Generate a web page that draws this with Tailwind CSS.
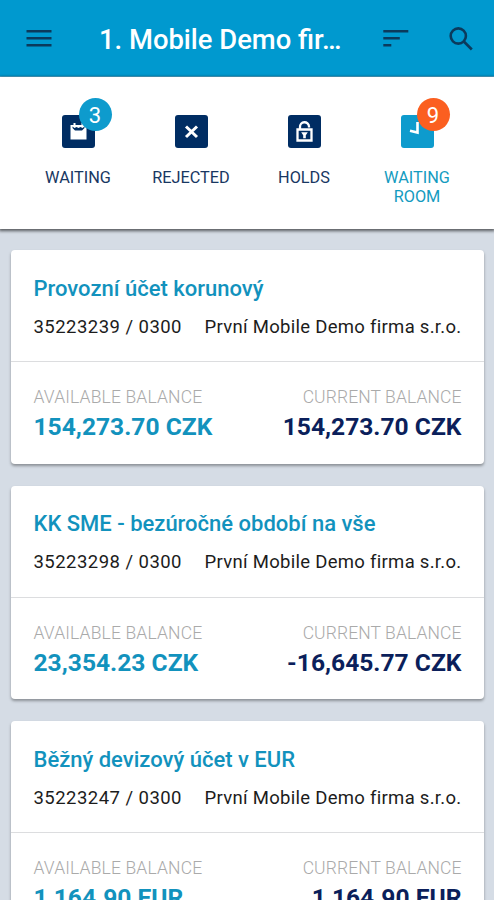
<!DOCTYPE html>
<html lang="en">
<head>
<meta charset="utf-8">
<title>Accounts</title>
<script src="https://cdn.jsdelivr.net/npm/@tailwindcss/browser@4"></script>
</head>
<body class="h-[900px] w-[494px] overflow-hidden bg-[#d5dce5] font-['Roboto',sans-serif]">
<header class="flex h-[77px] items-center border-b border-[#4fb2da] bg-[#0099cf]">
  <svg class="ml-[26px] h-[18px] w-[26px] shrink-0" viewBox="0 0 26 18" fill="none" stroke="#0b3a5c" stroke-width="2.4"><path d="M.5 2.2h25M.5 9.2h25M.5 16.2h25"/></svg>
  <h1 class="ml-[47px] w-[245px] shrink-0 pt-[3px] text-[27.4px] leading-8 font-medium whitespace-nowrap text-white">1. Mobile Demo fir…</h1>
  <svg class="ml-[39px] h-[18px] w-[26px] shrink-0" viewBox="0 0 26 18" fill="none" stroke="#0b3a5c" stroke-width="2.4"><path d="M.3 2.2h25M.3 9.2h16.5M.3 16.2h8"/></svg>
  <svg class="mt-px ml-[40px] h-6 w-6 shrink-0" viewBox="0 0 24 24" fill="none" stroke="#0b3a5c" stroke-width="2.6"><circle cx="9.3" cy="9" r="7.6"/><path d="M14.8 14.5l8 8"/></svg>
</header>
<nav class="relative grid h-[152px] grid-cols-[113px_113px_113px_113px] justify-center bg-white pt-[38px] pl-px text-center text-[16.3px] leading-[19px] text-[#183762] shadow-[0_1px_3px_1px_rgba(0,0,0,0.6)]">
  <div class="flex flex-col items-center">
    <div class="relative h-[33px] w-[33px]">
      <svg class="h-full w-full" viewBox="0 0 33 33"><rect width="33" height="33" rx="3" fill="#002d63"/><path d="M8.500 10h3V8h2v2h6V8h2v2h3v14.500h-16z" fill="#fff"/><path d="M10.500 11.500v1.500l2.500 2.500h7l2.500-2.500v-1.500l-2 1.500-2-1-2 1-2-1-2 1z" fill="#002d63"/></svg>
      <span class="absolute -top-[17px] left-[17px] flex h-[33px] w-[33px] items-center justify-center rounded-full bg-[#0e9bcd] pt-[2px] text-[22px] text-white">3</span>
    </div>
    <span class="mt-[20px]">WAITING</span>
  </div>
  <div class="flex flex-col items-center">
    <svg class="h-[33px] w-[33px]" viewBox="0 0 33 33"><rect width="33" height="33" rx="3" fill="#002d63"/><path d="M11 11.500l11 10.500M22 11.500L11 22" stroke="#fff" stroke-width="3"/></svg>
    <span class="mt-[20px]">REJECTED</span>
  </div>
  <div class="flex flex-col items-center">
    <svg class="h-[33px] w-[33px]" viewBox="0 0 33 33"><rect width="33" height="33" rx="3" fill="#002d63"/><path d="M9.500 14.500h14v11h-14zM12 14V12a4.500 4.500 0 0 1 9-.500v1" fill="none" stroke="#fff" stroke-width="2.300"/><path d="M13.200 17.300h6.600l-2 3v3h-2.600v-3z" fill="#fff"/></svg>
    <span class="mt-[20px]">HOLDS</span>
  </div>
  <div class="flex flex-col items-center text-[#149bbf]">
    <div class="relative h-[33px] w-[33px]">
      <svg class="h-full w-full" viewBox="0 0 33 33"><rect width="33" height="33" rx="3" fill="#0e9bcd"/><path d="M16.500 7v10.500L9 15.800" fill="none" stroke="#fff" stroke-width="2.600"/></svg>
      <span class="absolute -top-[17px] left-[16px] flex h-[33px] w-[33px] items-center justify-center rounded-full bg-[#fb5f20] pt-[2px] text-[22px] text-white">9</span>
    </div>
    <span class="mt-[20px] w-[80px]">WAITING ROOM</span>
  </div>
</nav>
<main class="flex flex-col gap-[22px] pt-[21px] pr-[10px] pl-[11px]">
  <article class="h-[213.500px] shrink-0 rounded-[4px] bg-white shadow-[0_2px_3px_rgba(0,0,0,0.35)]">
    <div class="h-[112px] border-b border-[#dcdddf] px-[22.500px] pt-[25px]">
      <h2 class="text-[22px] leading-[28px] font-medium whitespace-nowrap text-[#1292bd]">Provozní účet korunový</h2>
      <div class="mt-[12px] flex justify-between text-[18.500px] leading-6 whitespace-nowrap text-[#1c1c1c]"><span class="tracking-[0.46px]">35223239 / 0300</span><span class="tracking-[0.29px]">První Mobile Demo firma s.r.o.</span></div>
    </div>
    <div class="flex justify-between px-[22.500px] pt-[23px] whitespace-nowrap">
      <div><div class="text-[17.500px] leading-6 font-light tracking-[0.15px] text-[#aaaaaa]">AVAILABLE BALANCE</div><div class="mt-[2px] text-[24.600px] leading-[32px] font-bold text-[#1292bd]">154,273.70 CZK</div></div>
      <div class="text-right"><div class="text-[17.500px] leading-6 font-light tracking-[0.1px] text-[#aaaaaa]">CURRENT BALANCE</div><div class="mt-[2px] text-[24.600px] leading-[32px] font-bold text-[#0b1f5b]">154,273.70 CZK</div></div>
    </div>
  </article>
  <article class="h-[213.500px] shrink-0 rounded-[4px] bg-white shadow-[0_2px_3px_rgba(0,0,0,0.35)]">
    <div class="h-[112px] border-b border-[#dcdddf] px-[22.500px] pt-[24.500px]">
      <h2 class="text-[22px] leading-[28px] font-medium whitespace-nowrap text-[#1292bd]">KK SME - bezúročné období na vše</h2>
      <div class="mt-[12px] flex justify-between text-[18.500px] leading-6 whitespace-nowrap text-[#1c1c1c]"><span class="tracking-[0.46px]">35223298 / 0300</span><span class="tracking-[0.29px]">První Mobile Demo firma s.r.o.</span></div>
    </div>
    <div class="flex justify-between px-[22.500px] pt-[23px] whitespace-nowrap">
      <div><div class="text-[17.500px] leading-6 font-light tracking-[0.15px] text-[#aaaaaa]">AVAILABLE BALANCE</div><div class="mt-[2px] text-[24.600px] leading-[32px] font-bold text-[#1292bd]">23,354.23 CZK</div></div>
      <div class="text-right"><div class="text-[17.500px] leading-6 font-light tracking-[0.1px] text-[#aaaaaa]">CURRENT BALANCE</div><div class="mt-[2px] text-[24.600px] leading-[32px] font-bold text-[#0b1f5b]">-16,645.77 CZK</div></div>
    </div>
  </article>
  <article class="h-[213.500px] shrink-0 rounded-[4px] bg-white shadow-[0_2px_3px_rgba(0,0,0,0.35)]">
    <div class="h-[112px] border-b border-[#dcdddf] px-[22.500px] pt-[25px]">
      <h2 class="text-[22px] leading-[28px] font-medium whitespace-nowrap text-[#1292bd]">Běžný devizový účet v EUR</h2>
      <div class="mt-[12px] flex justify-between text-[18.500px] leading-6 whitespace-nowrap text-[#1c1c1c]"><span class="tracking-[0.46px]">35223247 / 0300</span><span class="tracking-[0.29px]">První Mobile Demo firma s.r.o.</span></div>
    </div>
    <div class="flex justify-between px-[22.500px] pt-[23px] whitespace-nowrap">
      <div><div class="text-[17.500px] leading-6 font-light tracking-[0.15px] text-[#aaaaaa]">AVAILABLE BALANCE</div><div class="mt-[2px] text-[24.600px] leading-[32px] font-bold text-[#1292bd]">1,164.90 EUR</div></div>
      <div class="text-right"><div class="text-[17.500px] leading-6 font-light tracking-[0.1px] text-[#aaaaaa]">CURRENT BALANCE</div><div class="mt-[2px] text-[24.600px] leading-[32px] font-bold text-[#0b1f5b]">1,164.90 EUR</div></div>
    </div>
  </article>
</main>
</body>
</html>
